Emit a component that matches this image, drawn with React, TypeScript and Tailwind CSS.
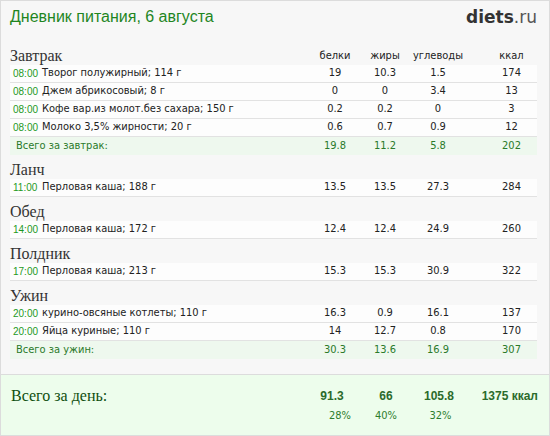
import React from "react";

type Row = { t: string; name: string; v: string[] };
type Section = { title: string; rows: Row[]; total?: { label: string; v: string[] }; header?: boolean };

const sections: Section[] = [
  {
    title: "Завтрак",
    header: true,
    rows: [
      { t: "08:00", name: "Творог полужирный; 114 г", v: ["19", "10.3", "1.5", "174"] },
      { t: "08:00", name: "Джем абрикосовый; 8 г", v: ["0", "0", "3.4", "13"] },
      { t: "08:00", name: "Кофе вар.из молот.без сахара; 150 г", v: ["0.2", "0.2", "0", "3"] },
      { t: "08:00", name: "Молоко 3,5% жирности; 20 г", v: ["0.6", "0.7", "0.9", "12"] },
    ],
    total: { label: "Всего за завтрак:", v: ["19.8", "11.2", "5.8", "202"] },
  },
  { title: "Ланч", rows: [{ t: "11:00", name: "Перловая каша; 188 г", v: ["13.5", "13.5", "27.3", "284"] }] },
  { title: "Обед", rows: [{ t: "14:00", name: "Перловая каша; 172 г", v: ["12.4", "12.4", "24.9", "260"] }] },
  { title: "Полдник", rows: [{ t: "17:00", name: "Перловая каша; 213 г", v: ["15.3", "15.3", "30.9", "322"] }] },
  {
    title: "Ужин",
    rows: [
      { t: "20:00", name: "курино-овсяные котлеты; 110 г", v: ["16.3", "0.9", "16.1", "137"] },
      { t: "20:00", name: "Яйца куриные; 110 г", v: ["14", "12.7", "0.8", "170"] },
    ],
    total: { label: "Всего за ужин:", v: ["30.3", "13.6", "16.9", "307"] },
  },
];

const tableFont = { fontFamily: '"DejaVu Sans Condensed", "Liberation Sans", sans-serif' };

function Cols({ v }: { v: string[] }) {
  return (
    <div className="flex shrink-0">
      <div className="w-[50px] text-center">{v[0]}</div>
      <div className="w-[50px] text-center">{v[1]}</div>
      <div className="w-[56px] text-center">{v[2]}</div>
      <div className="w-[20px]" />
      <div className="w-[51px] text-center">{v[3]}</div>
    </div>
  );
}

export default function App() {
  return (
    <div className="w-[550px] h-[436px] border border-[#dcdcdc] bg-[#f7f7f7] flex flex-col overflow-hidden">
      <div className="pl-[9px] pr-[12px]">
        <div className="h-[32px] flex items-center justify-between">
          <div className="text-[16px] text-[#1f861f] font-['Liberation_Sans',sans-serif]">Дневник питания, 6 августа</div>
          <div className="text-[17px] leading-none" style={{ fontFamily: '"DejaVu Sans", sans-serif' }}>
            <span className="font-bold text-[#333]">diets</span>
            <span className="text-[#555]">.ru</span>
          </div>
        </div>
        <div className="h-[8px]" />
        {sections.map((s) => (
          <div key={s.title}>
            <div className="h-[24px] flex items-center pt-[5px]">
              <div className="flex-1 text-[16px] text-[#333] font-['Liberation_Serif',serif]">{s.title}</div>
              {s.header && (
                <div className="text-[11px] text-[#222] pt-[1px]" style={tableFont}>
                  <Cols v={["белки", "жиры", "углеводы", "ккал"]} />
                </div>
              )}
            </div>
            {s.rows.map((r, i) => (
              <div
                key={i}
                className="h-[18px] flex items-center bg-[#fdfdfd] border-b border-[#e2e2e2] text-[11px] text-[#222]"
                style={tableFont}
              >
                <div className="w-[32px] pl-[3px] text-[10px] text-[#1d9a1d] font-['Liberation_Sans',sans-serif] shrink-0">{r.t}</div>
                <div className="flex-1 whitespace-nowrap">{r.name}</div>
                <Cols v={r.v} />
              </div>
            ))}
            {s.total && (
              <div className="h-[18px] flex items-center bg-[#eef8ee] text-[11px] text-[#2a7a2a]" style={tableFont}>
                <div className="flex-1 pl-[6px]">{s.total.label}</div>
                <Cols v={s.total.v} />
              </div>
            )}
          </div>
        ))}
      </div>
      <div className="mt-auto h-[61px] border-t border-[#dcdcdc] bg-[#edfdec] flex pl-[10px] pr-[11px] pt-[11px]">
        <div className="flex-1 text-[16px] text-[#0f4f0f] font-['Liberation_Serif',serif] leading-[20px]">Всего за день:</div>
        <div className="flex flex-col">
          <div className="flex text-[12px] font-bold text-[#2b6b2b] h-[20px] items-center font-['Liberation_Sans',sans-serif]">
            <div className="w-[50px] text-center pr-[8px]">91.3</div>
            <div className="w-[50px] text-center">66</div>
            <div className="w-[56px] text-center">105.8</div>
            <div className="w-[71px] text-right whitespace-nowrap">1375 ккал</div>
          </div>
          <div className="flex text-[11px] text-[#2e7d2e] h-[20px] items-center" style={tableFont}>
            <div className="w-[50px] text-center pl-[8px]">28%</div>
            <div className="w-[50px] text-center">40%</div>
            <div className="w-[56px] text-center pl-[3px]">32%</div>
            <div className="w-[71px]" />
          </div>
        </div>
      </div>
    </div>
  );
}
